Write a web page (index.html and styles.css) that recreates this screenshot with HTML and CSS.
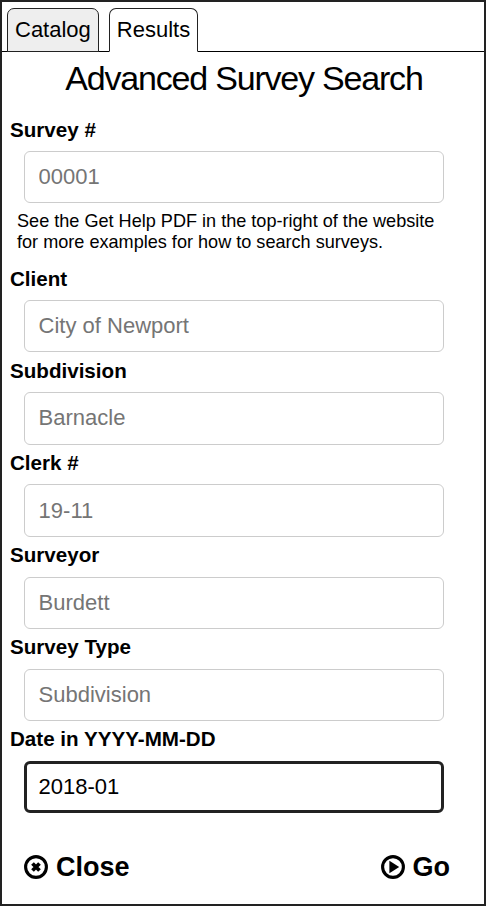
FILE: index.html
```html
<!DOCTYPE html>
<html lang="en">
<head>
<meta charset="utf-8">
<title>Advanced Survey Search</title>
<link rel="stylesheet" href="styles.css">
</head>
<body>
<div class="frame">
  <nav class="tabs">
    <a class="tab tab-off">Catalog</a>
    <a class="tab tab-on">Results</a>
  </nav>
  <main class="panel">
    <h1 class="title">Advanced Survey Search</h1>
    <form class="form">
      <label class="label">Survey #</label>
      <input class="field" type="text" placeholder="00001">
      <p class="help">See the Get Help PDF in the top-right of the website<br>for more examples for how to search surveys.</p>
      <label class="label">Client</label>
      <input class="field" type="text" placeholder="City of Newport">
      <label class="label">Subdivision</label>
      <input class="field" type="text" placeholder="Barnacle">
      <label class="label">Clerk #</label>
      <input class="field" type="text" placeholder="19-11">
      <label class="label">Surveyor</label>
      <input class="field" type="text" placeholder="Burdett">
      <label class="label">Survey Type</label>
      <input class="field" type="text" placeholder="Subdivision">
      <label class="label label-last">Date in YYYY-MM-DD</label>
      <input class="field field-focus" type="text" value="2018-01">
    </form>
    <div class="actions">
      <a class="action">
        <svg class="icon" viewBox="0 0 24 24" aria-hidden="true">
          <circle cx="12" cy="12" r="10.4" fill="none" stroke="#000" stroke-width="3.1"/>
          <path d="M8.5 8.5l7 7M15.5 8.5l-7 7" fill="none" stroke="#000" stroke-width="3.8"/>
        </svg>
        Close
      </a>
      <a class="action">
        <svg class="icon" viewBox="0 0 24 24" aria-hidden="true">
          <circle cx="12" cy="12" r="10.4" fill="none" stroke="#000" stroke-width="3.1"/>
          <path d="M8.4 5.8v12.4l9.8-6.2z" fill="#000"/>
        </svg>
        Go
      </a>
    </div>
  </main>
</div>
</body>
</html>
```
FILE: styles.css
```css
* { box-sizing: border-box; }
html, body { margin: 0; padding: 0; background: #fff; }
body { font-family: "Liberation Sans", Arial, sans-serif; color: #000; }
.frame {
  width: 486px;
  height: 906px;
  border: 2px solid #222;
  display: flex;
  flex-direction: column;
  overflow: hidden;
}
.tabs {
  display: flex;
  gap: 10px;
  height: 50px;
  padding: 6px 0 0 5px;
  border-bottom: 1px solid #000;
  flex: none;
}
.tab {
  height: 44px;
  margin-bottom: -1px;
  padding: 0 7px;
  font-size: 22px;
  line-height: 42px;
  border: 1px solid #222;
  border-radius: 7px 7px 0 0;
}
.tab-off { background: #eee; }
.tab-on { background: #fff; border-bottom-color: #fff; }
.panel { flex: 1; padding: 0 40px 0 8px; }
.title {
  margin: 7px 0 0;
  width: 468px;
  font-size: 34px;
  font-weight: 400;
  line-height: 39px;
  letter-spacing: -1.2px;
  text-align: center;
}
.form { margin-top: 19.6px; }
.label {
  display: block;
  font-size: 20.6px;
  font-weight: 700;
  line-height: 23px;
  margin-bottom: 10.4px;
}
.label-last { margin-top: -0.6px; margin-bottom: 11px; }
.field {
  display: block;
  width: 420px;
  height: 52.5px;
  margin: 0 0 6.3px 14px;
  padding: 0 14px 0 13.6px;
  font: 22px "Liberation Sans", Arial, sans-serif;
  color: #000;
  background: #fff;
  border: 1px solid #ccc;
  border-radius: 6px;
  outline: none;
}
.field::placeholder { color: #757575; opacity: 1; }
.field-focus { border: 3px solid #222; padding: 0 12px 0 11.6px; }
.help {
  margin: 7.3px 0 13.8px 7px;
  font-size: 18.1px;
  line-height: 21px;
}
.actions {
  display: flex;
  justify-content: space-between;
  width: 426px;
  margin: 38px 0 0 14px;
}
.action {
  display: flex;
  align-items: center;
  gap: 8px;
  font-size: 27px;
  font-weight: 700;
  line-height: 32px;
}
.icon { width: 24px; height: 24px; flex: none; }
```
